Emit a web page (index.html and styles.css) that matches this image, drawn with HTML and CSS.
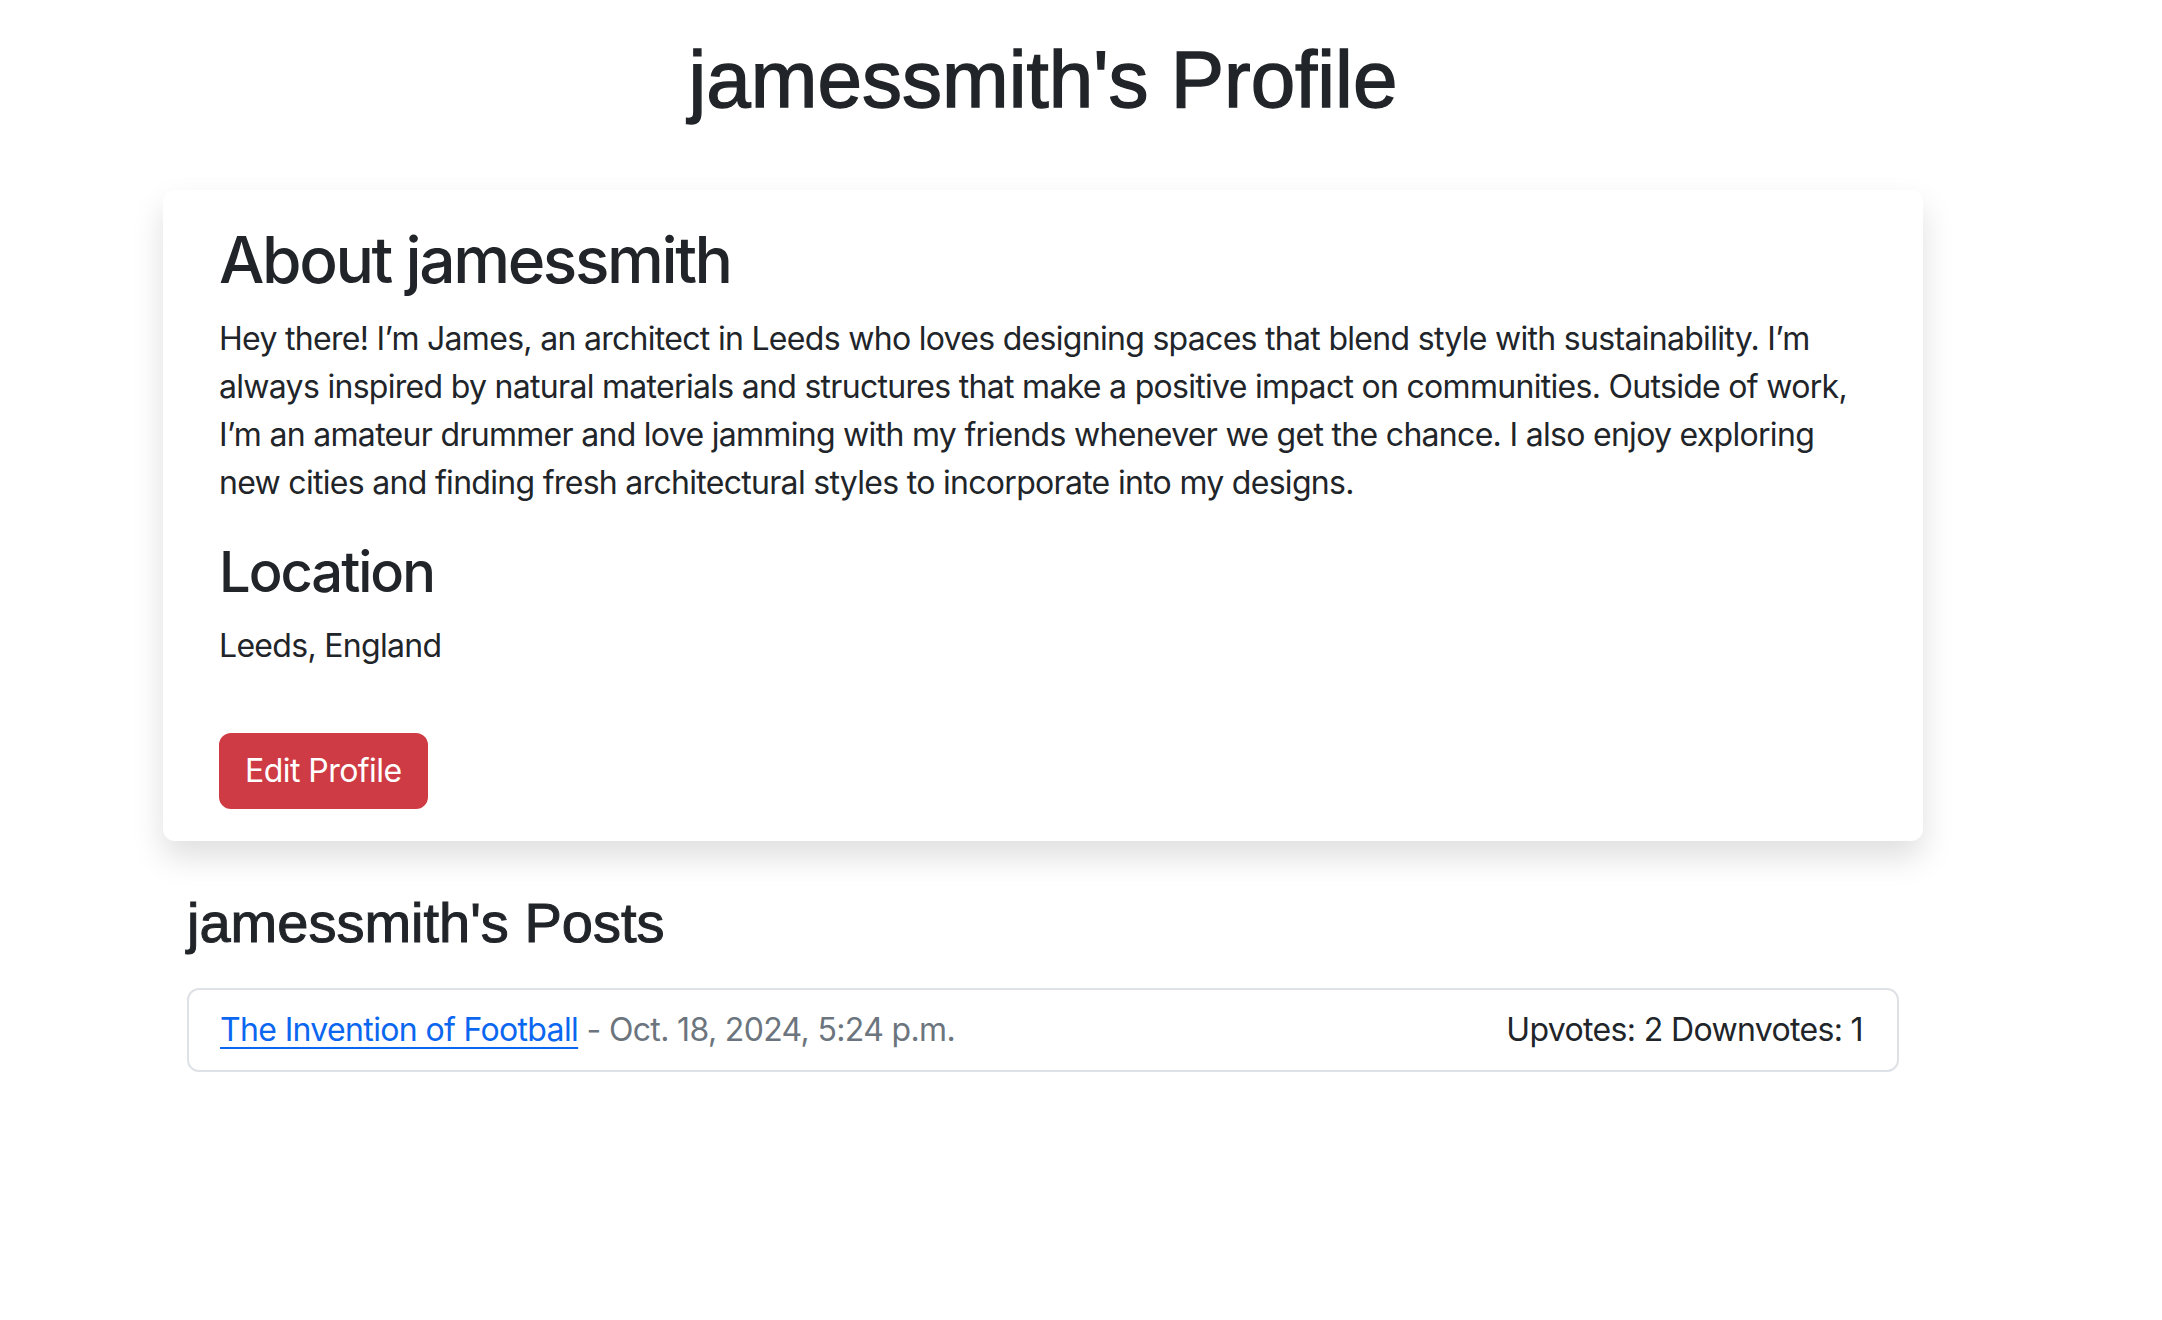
FILE: index.html
```html
<!DOCTYPE html>
<html lang="en">
<head>
<meta charset="utf-8">
<title>jamessmith's Profile</title>
<link rel="stylesheet" href="styles.css">
</head>
<body>
<div class="page">
  <h1 class="page-title">jamessmith's Profile</h1>

  <section class="card">
    <h2 class="card-heading">About jamessmith</h2>
    <p class="card-text">Hey there! I’m James, an architect in Leeds who loves designing spaces that blend style with sustainability. I’m always inspired by natural materials and structures that make a positive impact on communities. Outside of work, I’m an amateur drummer and love jamming with my friends whenever we get the chance. I also enjoy exploring new cities and finding fresh architectural styles to incorporate into my designs.</p>
    <h3 class="card-subheading">Location</h3>
    <p class="card-text">Leeds, England</p>
    <div class="card-actions">
      <a class="btn-danger" href="#">Edit Profile</a>
    </div>
  </section>

  <section class="posts">
    <h3 class="posts-title">jamessmith's Posts</h3>
    <ul class="post-list">
      <li class="post-item">
        <span class="post-main"><a class="post-link" href="#">The Invention of Football</a><span class="post-date"> - Oct. 18, 2024, 5:24 p.m.</span></span>
        <span class="post-votes">Upvotes: 2 Downvotes: 1</span>
      </li>
    </ul>
  </section>
</div>
</body>
</html>
```

FILE: styles.css
```css
* { box-sizing: border-box; }

html, body {
  margin: 0;
  padding: 0;
  background: #ffffff;
}

body {
  font-family: Inter, Roboto, "Noto Sans", sans-serif;
  font-size: 32px;
  line-height: 48px;
  color: #212529;
}

.page {
  width: 1760px;
  margin-left: 163px;
  padding-top: 32px;
}

.page-title {
  margin: 0 0 62px 0;
  text-align: center;
  font-family: "Liberation Sans", Arial, sans-serif;
  font-weight: 400;
  font-size: 80px;
  line-height: 96px;
  -webkit-text-stroke: 1.4px #212529;
}

.card {
  background: #ffffff;
  border-radius: 12px;
  box-shadow: 0 16px 32px rgba(0, 0, 0, 0.13);
  padding: 32px 56px 32px 56px;
}

.card-heading {
  margin: 0 0 16px 0;
  font-weight: 500;
  font-size: 64px;
  line-height: 76.8px;
  letter-spacing: -2.4px;
}

.card-subheading {
  margin: 0 0 16px 0;
  font-weight: 500;
  font-size: 56px;
  line-height: 67.2px;
  letter-spacing: -2px;
}

.card-text {
  margin: 0 0 32px 0;
  letter-spacing: -0.7px;
}

.card-actions {
  padding-top: 31px;
  display: flex;
}

.btn-danger {
  display: inline-block;
  background: #cf3b44;
  color: #ffffff;
  text-decoration: none;
  border: 2px solid #cf3b44;
  border-radius: 12px;
  padding: 12px 24px;
  font-size: 32px;
  line-height: 48px;
  letter-spacing: -0.55px;
}

.posts {
  margin-top: 48px;
  padding: 0 24px;
}

.posts-title {
  margin: 0 0 32px 0;
  font-family: "Liberation Sans", Arial, sans-serif;
  font-weight: 400;
  font-size: 56px;
  line-height: 67.2px;
  -webkit-text-stroke: 1px #212529;
}

.post-list {
  list-style: none;
  margin: 0;
  padding: 0;
}

.post-item {
  display: flex;
  justify-content: space-between;
  align-items: center;
  border: 2px solid #dee2e6;
  border-radius: 12px;
  padding: 16px 34px 16px 31px;
  letter-spacing: -0.65px;
}

.post-link {
  color: #0b66f0;
  text-decoration: underline;
  text-underline-offset: 6px;
  text-decoration-thickness: 2px;
}

.post-date {
  color: #6c757d;
}

.post-votes {
  color: #212529;
}
```
